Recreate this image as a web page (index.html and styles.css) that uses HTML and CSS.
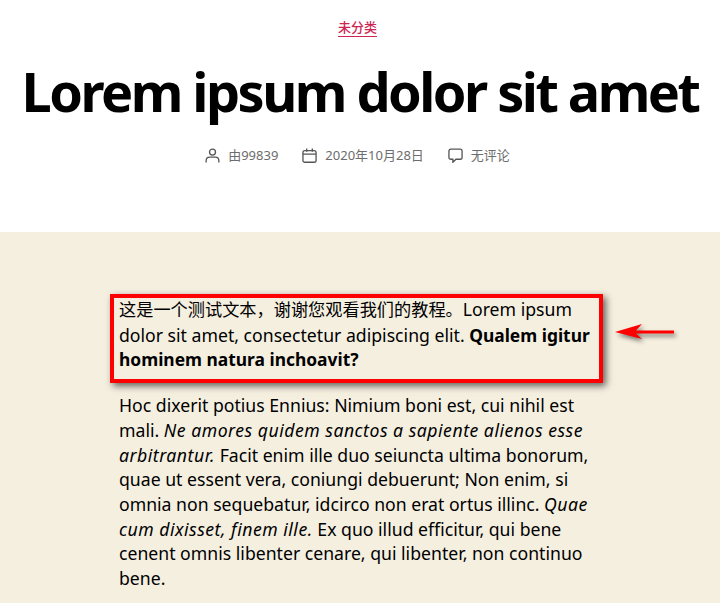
FILE: index.html
```html
<!DOCTYPE html>
<html lang="zh">
<head>
  <meta charset="UTF-8" />
  <title>Lorem ipsum dolor sit amet</title>
  <link rel="stylesheet" href="styles.css">
</head>
<body>

<header class="entry-header">
  <div class="entry-cat"><a href="#">未分类</a></div>
  <h1>Lorem ipsum dolor sit amet</h1>
  <ul class="entry-meta">
    <li>
      <svg viewBox="0 0 16 16" width="15" height="15"><circle cx="8" cy="4.300" r="3.200"/><path d="M1.200 15.500v-1.800c0-2.300 1.800-3.900 3.900-3.900h5.800c2.100 0 3.900 1.600 3.900 3.900v1.800"/></svg>
      <span>由99839</span>
    </li>
    <li>
      <svg viewBox="0 0 16 16" width="15" height="15"><rect x="1" y="2.800" width="14" height="12.400" rx="2"/><path d="M1 6.500h14M5 .5v3.400M11 .5v3.400"/></svg>
      <span>2020年10月28日</span>
    </li>
    <li>
      <svg viewBox="0 0 16 16" width="15" height="15"><path d="M3 1.200h10a2 2 0 0 1 2 2v6.800a2 2 0 0 1-2 2H8.500L5.200 15.200V12H3a2 2 0 0 1-2-2V3.200a2 2 0 0 1 2-2z"/></svg>
      <span>无评论</span>
    </li>
  </ul>
</header>

<main class="entry-content">
  <p><span class="cjk">这是一个测试文本，谢谢您观看我们的教程。</span>Lorem ipsum<br>dolor sit amet, consectetur adipiscing elit. <strong>Qualem igitur<br>hominem natura inchoavit?</strong></p>
  <p>Hoc dixerit potius Ennius: Nimium boni est, cui nihil est<br>mali. <em>Ne amores quidem sanctos a sapiente alienos esse<br>arbitrantur.</em> Facit enim ille duo seiuncta ultima bonorum,<br>quae ut essent vera, coniungi debuerunt; Non enim, si<br>omnia non sequebatur, idcirco non erat ortus illinc. <em>Quae<br>cum dixisset, finem ille.</em> Ex quo illud efficitur, qui bene<br>cenent omnis libenter cenare, qui libenter, non continuo<br>bene.</p>
</main>

<!-- annotation drawn over the screenshot -->
<div class="mark-box"></div>
<svg class="mark-arrow" viewBox="0 0 64 20" width="64" height="20">
  <path d="M2 11 L29 3 L23 9.500 H61 V12.500 H23 L29 18 Z"/>
</svg>

</body>
</html>
```

FILE: styles.css
```css
html, body { margin: 0; padding: 0; }
body { height: 603px; overflow: hidden; position: relative; background: #fff; color: #000; font-family: "Noto Sans", "Noto Sans CJK SC", sans-serif; }

.entry-header { height: 232px; padding-top: 18px; box-sizing: border-box; text-align: center; }
.entry-cat { font-size: 13px; font-weight: 500; line-height: 18px; padding-right: 5px; }
.entry-cat a { color: #cd2653; text-decoration: none; border-bottom: 1px solid #cd2653; }
h1 { margin: 19px 0 0; font-size: 54px; line-height: 72px; font-weight: 700; letter-spacing: -2.520px; white-space: nowrap; }

.entry-meta { list-style: none; display: flex; justify-content: center; gap: 24px; margin: 18px 0 0; padding: 0 5px 0 0; font-size: 13px; line-height: 20px; color: #6d6d6d; }
.entry-meta li { display: flex; align-items: center; gap: 8px; }
.entry-meta svg { fill: none; stroke: #555; stroke-width: 1.400; }

.entry-content { background: #f5efe0; height: 371px; padding: 65px 0 0 119px; box-sizing: border-box; font-size: 17.650px; line-height: 24.700px; white-space: nowrap; }
.entry-content p { margin: 0 0 21px; }
.entry-content strong { font-size: 17.400px; }
.entry-content em { letter-spacing: 0.500px; }
.cjk { font-size: 17.200px; }

.mark-box { position: absolute; left: 110px; top: 294px; width: 485px; height: 81px; border: 4px solid #f00; box-shadow: 3px 3px 7px rgba(0,0,0,0.6); }
.mark-arrow { position: absolute; left: 613px; top: 321px; fill: #f00; filter: drop-shadow(2px 3px 2px rgba(0,0,0,0.5)); }
```
